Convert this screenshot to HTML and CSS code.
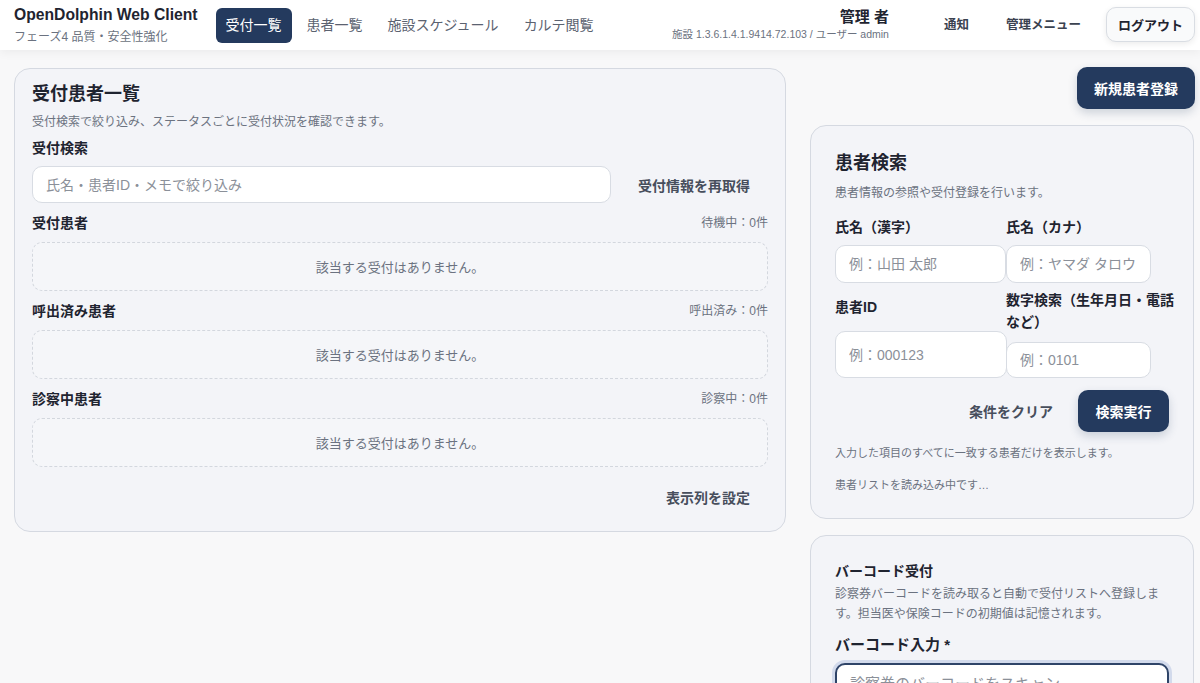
FILE: index.html
```html
<!DOCTYPE html>
<html lang="ja">
<head>
    <meta charset="UTF-8">
    <meta name="viewport" content="width=device-width, initial-scale=1.0">
    <title>OpenDolphin Web Client</title>
    <link rel="stylesheet" href="styles.css">
</head>
<body>
    <header class="app-header">
        <div class="brand">
            <div class="brand-title">OpenDolphin Web Client</div>
            <div class="brand-sub">フェーズ4 品質・安全性強化</div>
        </div>
        <nav class="main-nav">
            <a class="nav-item active">受付一覧</a>
            <a class="nav-item">患者一覧</a>
            <a class="nav-item">施設スケジュール</a>
            <a class="nav-item">カルテ閲覧</a>
        </nav>
        <div class="header-right">
            <div class="user-info">
                <div class="user-name">管理 者</div>
                <div class="user-meta">施設 1.3.6.1.4.1.9414.72.103 / ユーザー admin</div>
            </div>
            <button type="button" class="ghost-link">通知</button>
            <button type="button" class="ghost-link">管理メニュー</button>
            <button type="button" class="logout-btn">ログアウト</button>
        </div>
    </header>

    <main class="page">
        <section class="card reception-card">
            <h2 class="card-title">受付患者一覧</h2>
            <p class="card-desc">受付検索で絞り込み、ステータスごとに受付状況を確認できます。</p>

            <label class="field-label" for="receptionSearch">受付検索</label>
            <div class="search-row">
                <input type="text" id="receptionSearch" class="text-input" placeholder="氏名・患者ID・メモで絞り込み">
                <button type="button" class="text-btn">受付情報を再取得</button>
            </div>

            <div class="status-head">
                <span class="status-title">受付患者</span>
                <span class="status-count">待機中：0件</span>
            </div>
            <div class="empty-box">該当する受付はありません。</div>

            <div class="status-head">
                <span class="status-title">呼出済み患者</span>
                <span class="status-count">呼出済み：0件</span>
            </div>
            <div class="empty-box">該当する受付はありません。</div>

            <div class="status-head">
                <span class="status-title">診察中患者</span>
                <span class="status-count">診察中：0件</span>
            </div>
            <div class="empty-box">該当する受付はありません。</div>

            <div class="card-footer">
                <button type="button" class="text-btn">表示列を設定</button>
            </div>
        </section>

        <aside class="side-column">
            <div class="side-actions">
                <button type="button" class="primary-btn">新規患者登録</button>
            </div>

            <section class="card side-card">
                <h2 class="card-title">患者検索</h2>
                <p class="card-desc">患者情報の参照や受付登録を行います。</p>

                <div class="search-grid">
                    <div class="field">
                        <label class="field-label">氏名（漢字）</label>
                        <input type="text" class="text-input" placeholder="例：山田 太郎">
                    </div>
                    <div class="field">
                        <label class="field-label">氏名（カナ）</label>
                        <input type="text" class="text-input narrow" placeholder="例：ヤマダ タロウ">
                    </div>
                    <div class="field field-tall">
                        <label class="field-label">患者ID</label>
                        <input type="text" class="text-input tall" placeholder="例：000123">
                    </div>
                    <div class="field field-wrap">
                        <label class="field-label">数字検索（生年月日・電話など）</label>
                        <input type="text" class="text-input narrow short" placeholder="例：0101">
                    </div>
                </div>

                <div class="button-row">
                    <button type="button" class="text-btn">条件をクリア</button>
                    <button type="button" class="primary-btn small">検索実行</button>
                </div>

                <p class="hint">入力した項目のすべてに一致する患者だけを表示します。</p>
                <p class="hint loading">患者リストを読み込み中です…</p>
            </section>

            <section class="card side-card barcode-card">
                <h3 class="sub-title">バーコード受付</h3>
                <p class="card-desc multi">診察券バーコードを読み取ると自動で受付リストへ登録します。担当医や保険コードの初期値は記憶されます。</p>
                <label class="barcode-label">バーコード入力 *</label>
                <input type="text" class="text-input focused" placeholder="診察券のバーコードをスキャン">
            </section>
        </aside>
    </main>
</body>
</html>
```

FILE: styles.css
```css
* {
    box-sizing: border-box;
}

body {
    margin: 0;
    font-family: "Liberation Sans", "Noto Sans CJK JP", sans-serif;
    background: #f8f8f9;
    color: #1f2430;
    overflow: hidden;
}

button,
input {
    font-family: inherit;
}

/* ヘッダー */
.app-header {
    display: flex;
    align-items: center;
    height: 50px;
    padding: 0 5px 0 14px;
    background: #fff;
    box-shadow: 0 2px 10px rgba(0, 0, 0, 0.06);
    position: relative;
    z-index: 1;
}

.brand {
    margin-right: 18px;
}

.brand-title {
    font-size: 15.7px;
    font-weight: bold;
    line-height: 20px;
}

.brand-sub {
    font-size: 12px;
    color: #6b7280;
    line-height: 18px;
    margin-top: 3px;
}

.main-nav {
    display: flex;
    gap: 5px;
}

.nav-item {
    font-size: 14px;
    line-height: 35px;
    padding: 0 10px;
    border-radius: 6px;
    color: #5b6270;
}

.nav-item.active {
    background: #243a5e;
    color: #fff;
}

.header-right {
    margin-left: auto;
    display: flex;
    align-items: center;
    gap: 13px;
}

.user-info {
    text-align: right;
    margin-right: 30px;
}

.user-name {
    font-size: 15px;
    font-weight: bold;
    line-height: 20px;
    margin-top: -3px;
}

.user-meta {
    font-size: 10.5px;
    color: #6b7280;
    line-height: 14px;
}

.ghost-link {
    border: none;
    background: none;
    font-size: 12.5px;
    font-weight: 600;
    color: #3b4250;
    padding: 6px 12px 10px;
}

.logout-btn {
    height: 35px;
    padding: 0 11px;
    font-size: 13px;
    font-weight: bold;
    color: #1f2430;
    background: #f9fafb;
    border: 1px solid #d9dde3;
    border-radius: 10px;
    box-shadow: 0 2px 6px rgba(0, 0, 0, 0.08);
    margin-top: -1px;
}

/* レイアウト */
.page {
    display: grid;
    grid-template-columns: minmax(0, 1fr) 385px;
    gap: 24px;
    padding: 18px 5px 0 14px;
    align-items: start;
}

.card {
    background: #f3f4f8;
    border: 1px solid #d5d9e1;
    border-radius: 16px;
}

.reception-card {
    padding: 12px 17px 16px;
}

.card-title {
    margin: 0;
    font-size: 18px;
    line-height: 26px;
    font-weight: bold;
}

.card-desc {
    margin: 6px 0 0;
    font-size: 12px;
    line-height: 18px;
    color: #6b7280;
}

.field-label {
    display: block;
    font-size: 14px;
    font-weight: bold;
    line-height: 20px;
    margin-top: 7px;
}

.search-row {
    display: flex;
    gap: 9px;
    margin-top: 8px;
}

.search-row .text-input {
    width: 579px;
    height: 37px;
}

.text-input {
    display: block;
    width: 100%;
    height: 38px;
    padding: 0 13px;
    font-size: 14px;
    color: #1f2430;
    background: #fff;
    border: 1px solid #d8dce3;
    border-radius: 10px;
    outline: none;
}

.text-input::placeholder {
    color: #8b9099;
}

.text-btn {
    border: none;
    background: none;
    font-size: 14px;
    font-weight: bold;
    color: #474e5c;
    padding: 0 18px;
    height: 36px;
    white-space: nowrap;
}

.search-row .text-btn {
    margin-left: auto;
    height: 37px;
}

.status-head {
    display: flex;
    justify-content: space-between;
    align-items: center;
    margin-top: 10px;
    line-height: 20px;
}

.status-title {
    font-size: 14px;
    font-weight: bold;
}

.status-count {
    font-size: 12px;
    color: #6b7280;
}

.empty-box {
    margin-top: 9px;
    height: 49px;
    display: flex;
    align-items: center;
    justify-content: center;
    font-size: 13px;
    color: #6b7280;
    border: 1px dashed #d3d7de;
    border-radius: 10px;
    background: #f5f6f9;
}

.card-footer {
    display: flex;
    justify-content: flex-end;
    margin-top: 12px;
}

/* 右カラム */
.side-column {
    display: flex;
    flex-direction: column;
    gap: 16px;
    margin-top: -1px;
}

.side-actions {
    display: flex;
    justify-content: flex-end;
}

.primary-btn {
    height: 42px;
    padding: 0 17px;
    font-size: 14px;
    font-weight: bold;
    color: #fff;
    background: #243a5e;
    border: none;
    border-radius: 10px;
    box-shadow: 0 4px 10px rgba(36, 58, 94, 0.2);
}

.primary-btn.small {
    padding: 0 17.5px;
}

.side-card {
    padding: 24px 24px 25px;
    margin-right: 1px;
}

.side-card .card-desc {
    margin-top: 8px;
}

.search-grid {
    display: grid;
    grid-template-columns: 171px 1fr;
    row-gap: 6px;
    margin-top: 14px;
}

.field {
    display: flex;
    flex-direction: column;
    justify-content: flex-end;
    gap: 7px;
}

.field .field-label {
    margin-top: 0;
    line-height: 22px;
}

.field-tall {
    gap: 13px;
}

.field-wrap {
    gap: 9px;
}

.field-wrap .field-label {
    margin-right: -6px;
}

.text-input.narrow {
    width: 145px;
}

.text-input.short {
    height: 36px;
}

.text-input.tall {
    width: 172px;
    height: 47px;
}

.button-row {
    display: flex;
    justify-content: flex-end;
    align-items: center;
    gap: 7px;
    margin-top: 12px;
}

.hint {
    margin: 13px 0 0;
    font-size: 11px;
    line-height: 16px;
    color: #6b7280;
}

.hint.loading {
    margin-top: 16px;
}

.barcode-card {
    padding-bottom: 40px;
}

.sub-title {
    margin: 0;
    font-size: 14px;
    font-weight: bold;
    line-height: 22px;
}

.card-desc.multi {
    margin-top: 2px;
    line-height: 20px;
}

.barcode-label {
    display: block;
    margin-top: 10px;
    font-size: 15px;
    font-weight: bold;
    line-height: 22px;
}

.text-input.focused {
    margin-top: 7px;
    height: 40px;
    font-size: 15px;
    border: 2px solid #2f4468;
    box-shadow: 0 0 0 3px rgba(110, 140, 200, 0.25);
}
```
